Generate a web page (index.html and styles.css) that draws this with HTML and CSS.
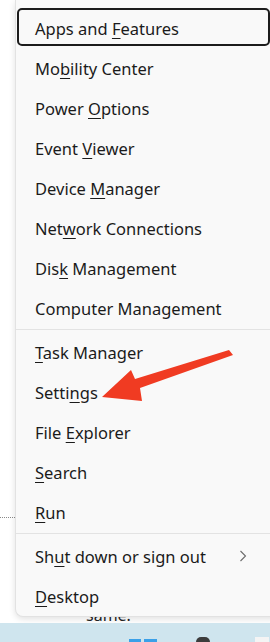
FILE: index.html
```html
<!DOCTYPE html>
<html lang="en">

<head>
    <meta charset="UTF-8">
    <meta name="viewport" content="width=device-width, initial-scale=1.0">
    <title>Quick Link Menu</title>
    <link rel="stylesheet" href="styles.css">
</head>

<body>
    <div class="screen">
        <div class="desk">
            <div class="side">
                <div class="dots"></div>
            </div>

            <div class="menu">
                <div class="item focused"><span>Apps and <u>F</u>eatures</span></div>
                <div class="item"><span>Mo<u>b</u>ility Center</span></div>
                <div class="item"><span>Power <u>O</u>ptions</span></div>
                <div class="item"><span>Event <u>V</u>iewer</span></div>
                <div class="item"><span>Device <u>M</u>anager</span></div>
                <div class="item"><span>Net<u>w</u>ork Connections</span></div>
                <div class="item"><span>Dis<u>k</u> Management</span></div>
                <div class="item"><span>Computer Management</span></div>
                <div class="sep"></div>
                <div class="item"><span><u>T</u>ask Manager</span></div>
                <div class="item"><span>Setti<u>n</u>gs</span></div>
                <div class="item"><span>File <u>E</u>xplorer</span></div>
                <div class="item"><span><u>S</u>earch</span></div>
                <div class="item"><span><u>R</u>un</span></div>
                <div class="sep"></div>
                <div class="item">
                    <span>Sh<u>u</u>t down or sign out</span>
                    <svg class="chev" width="8" height="12" viewBox="0 0 8 12">
                        <polyline points="1.5,1 6.5,6 1.5,11" fill="none" stroke="#6b6b6b" stroke-width="1.1" />
                    </svg>
                </div>
                <div class="item"><span><u>D</u>esktop</span></div>
            </div>
        </div>

        <div class="peek"><span>same.</span></div>

        <div class="taskbar">
            <div class="win-logo"></div>
            <div class="search-dot"></div>
            <div class="tray-box"></div>
        </div>
    </div>

    <!-- annotation arrow pointing at Settings -->
    <svg class="arrow" width="270" height="642" viewBox="0 0 270 642">
        <polygon points="102,397 131,370 135,379 229,350 233,355 140,388 142,401" fill="#f03b22" />
    </svg>
</body>

</html>
```

FILE: styles.css
```css
body {
    margin: 0;
    width: 270px;
    height: 642px;
    overflow: hidden;
    background-color: #fff;
    font-family: 'Noto Sans', 'Open Sans', sans-serif;
    color: #1b1b1b;
    position: relative;
}

.screen {
    display: flex;
    flex-direction: column;
}

.desk {
    display: flex;
    height: 617px;
}

.side {
    width: 15px;
    flex-shrink: 0;
}

.dots {
    margin-top: 517px;
    border-top: 1px dotted #8a8a8a;
}

.menu {
    width: 262px;
    flex-shrink: 0;
    box-sizing: border-box;
    display: flex;
    flex-direction: column;
    gap: 2px;
    padding: 8px 0 0 1px;
    background-color: #f9f9f9;
    border-left: 1px solid #e2e2e2;
    border-bottom: 1px solid #e2e2e2;
    border-bottom-left-radius: 8px;
    box-shadow: 0 2px 6px rgba(0, 0, 0, 0.12);
}

.item {
    display: flex;
    align-items: center;
    justify-content: space-between;
    height: 38px;
    flex-shrink: 0;
    box-sizing: border-box;
    width: 253px;
    padding: 2px 20px 0 16px;
    border: 2px solid transparent;
    border-radius: 5px;
    font-size: 16.5px;
    white-space: nowrap;
}

.item u {
    text-underline-offset: 3px;
    text-decoration-thickness: 1px;
}

.item.focused {
    border-color: #1c1c1c;
}

.chev {
    margin-right: 1px;
}

.sep {
    height: 1px;
    flex-shrink: 0;
    margin: 1px 0 0 -1px;
    background-color: #e3e3e3;
}

.peek {
    height: 6px;
    overflow: hidden;
    padding-left: 86px;
    font-size: 16px;
}

.peek span {
    display: block;
    margin-top: -12px;
    line-height: 20px;
    color: #222;
}

.taskbar {
    height: 19px;
    background-color: #cfe5ee;
    display: flex;
    align-items: flex-end;
}

.win-logo {
    width: 28px;
    height: 3px;
    margin-left: 129px;
    background: linear-gradient(90deg, #3aa0e8 0 12px, transparent 12px 15px, #3aa0e8 15px);
}

.search-dot {
    width: 14px;
    height: 5px;
    margin-left: 39px;
    border-radius: 7px 7px 0 0;
    background-color: #3c3c3c;
}

.tray-box {
    width: 14px;
    height: 5px;
    margin-left: 45px;
    background-color: #f4f4f4;
}

.arrow {
    position: absolute;
    left: 0;
    top: 0;
    pointer-events: none;
}
```
